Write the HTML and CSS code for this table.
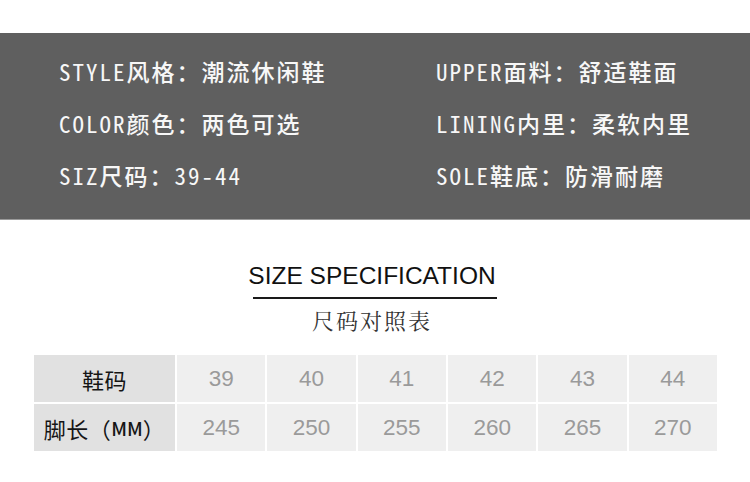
FILE: index.html
```html
<!DOCTYPE html>
<html lang="zh-CN">
<head>
<meta charset="utf-8">
<title>尺码对照表</title>
<link rel="stylesheet" href="styles.css">
</head>
<body>
<div class="page">
  <section class="band">
    <div class="col">
      <p class="item"><span class="en">STYLE</span>风格：潮流休闲鞋</p>
      <p class="item"><span class="en">COLOR</span>颜色：两色可选</p>
      <p class="item"><span class="en">SIZ</span>尺码：<span class="en">39-44</span></p>
    </div>
    <div class="col">
      <p class="item"><span class="en">UPPER</span>面料：舒适鞋面</p>
      <p class="item"><span class="en">LINING</span>内里：柔软内里</p>
      <p class="item"><span class="en">SOLE</span>鞋底：防滑耐磨</p>
    </div>
  </section>

  <section class="heading">
    <h1 class="title">SIZE SPECIFICATION</h1>
    <div class="rule"></div>
    <h2 class="subtitle">尺码对照表</h2>
  </section>

  <section class="table">
    <div class="cell head">鞋码</div>
    <div class="cell num">39</div>
    <div class="cell num">40</div>
    <div class="cell num">41</div>
    <div class="cell num">42</div>
    <div class="cell num">43</div>
    <div class="cell num">44</div>
    <div class="cell head">脚长（<span class="mm">MM</span>）</div>
    <div class="cell num">245</div>
    <div class="cell num">250</div>
    <div class="cell num">255</div>
    <div class="cell num">260</div>
    <div class="cell num">265</div>
    <div class="cell num">270</div>
  </section>
</div>
</body>
</html>
```

FILE: styles.css
```css
html, body {
  margin: 0;
  padding: 0;
  background: #ffffff;
}

.page {
  width: 750px;
  height: 482px;
  overflow: hidden;
  background: #ffffff;
  padding-top: 33px;
  box-sizing: border-box;
}

.band {
  height: 187px;
  background: #5f5f5f;
  border-bottom: 1px solid #9a9a9a;
  box-sizing: border-box;
  display: grid;
  grid-template-columns: 377px 1fr;
  padding: 12px 0 0 59px;
}

.col {
  display: flex;
  flex-direction: column;
}

.item {
  margin: 0;
  height: 52px;
  line-height: 52px;
  color: #f7f7f7;
  font-family: "Noto Sans CJK SC", "Noto Sans", sans-serif;
  font-weight: 500;
  font-size: 23px;
  letter-spacing: 2px;
  white-space: nowrap;
}

.en {
  font-family: "Noto Sans Mono CJK SC", "Liberation Mono", monospace;
}

.heading {
  display: flex;
  flex-direction: column;
  align-items: center;
  padding-top: 42px;
}

.title {
  margin: 0;
  font-family: "Liberation Sans", Arial, sans-serif;
  font-weight: 400;
  font-size: 24.5px;
  line-height: 28px;
  color: #111111;
  letter-spacing: 0;
  transform: translateX(-3px);
}

.rule {
  width: 244px;
  height: 2px;
  background: #1a1a1a;
  margin-top: 7px;
}

.subtitle {
  margin: 7px 0 0;
  font-family: "Noto Serif CJK SC", "Noto Sans CJK SC", serif;
  font-weight: 400;
  font-size: 22px;
  line-height: 28px;
  letter-spacing: 2px;
  color: #333333;
  transform: translateX(-3px);
}

.table {
  margin: 21px 0 0 34px;
  width: 683px;
  display: grid;
  grid-template-columns: 141px repeat(6, 1fr);
  grid-auto-rows: 47px;
  gap: 2px;
}

.cell {
  display: flex;
  align-items: center;
  justify-content: center;
  background: #efefef;
}

.head {
  background: #e1e1e1;
  color: #151515;
  font-family: "Noto Sans CJK SC", sans-serif;
  font-weight: 400;
  font-size: 22px;
  letter-spacing: 0.5px;
}

.mm {
  font-family: "Noto Sans CJK SC", sans-serif;
  font-weight: 500;
  font-size: 19px;
  letter-spacing: 0;
}

.num {
  color: #9a9a9a;
  font-family: "Liberation Sans", Arial, sans-serif;
  font-size: 22.5px;
}
```
